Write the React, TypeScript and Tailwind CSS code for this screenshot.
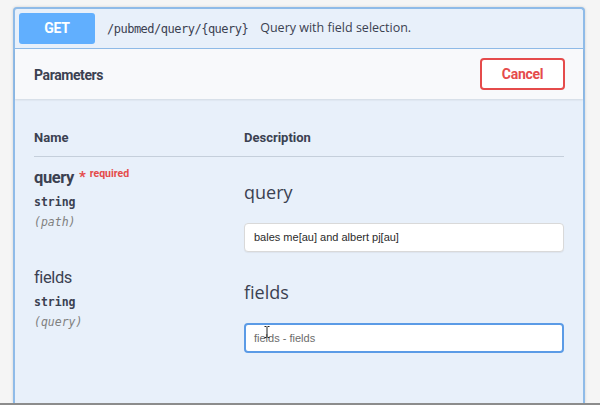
import React from "react";

const sans = "font-['Open_Sans','Liberation_Sans',sans-serif]";
const narrow = "font-['Roboto','Liberation_Sans',sans-serif]";
const mono = "font-['DejaVu_Sans_Mono','Liberation_Mono',monospace]";

type Param = {
  name: string;
  type: string;
  location: string;
  required?: boolean;
  value: string;
  focused?: boolean;
};

const params: Param[] = [
  { name: "query", type: "string", location: "(path)", required: true, value: "bales me[au] and albert pj[au]" },
  { name: "fields", type: "string", location: "(query)", value: "fields - fields", focused: true },
];

const ParamRow = ({ p }: { p: Param }) => {
  return (
    <div className="flex">
      <div className={p.required ? "w-[210px] pt-[11px]" : "w-[210px] pt-[16px]"}>
        <div className={`${narrow} flex items-start h-5`}>
          <span
            className={
              p.required
                ? "text-[16.5px] leading-5 tracking-[-0.4px] font-bold text-[#3b4151]"
                : "text-[16.5px] leading-5 tracking-[-0.4px] text-[#3b4151]"
            }
          >
            {p.name}
          </span>
          {p.required && (
            <>
              <span className="ml-[5px] mt-[1px] text-[15px] leading-4 text-[#e54b4b] font-bold">*</span>
              <span className="ml-[4px] -mt-[2px] text-[10.5px] leading-4 text-[#e54b4b] font-bold">required</span>
            </>
          )}
        </div>
        <div className={`${mono} mt-[6px] text-[11.5px] leading-4 font-semibold text-[#3b4151]`}>{p.type}</div>
        <div className={`${mono} mt-[4px] text-[11.5px] leading-4 italic text-[#808080]`}>{p.location}</div>
      </div>
      <div className="flex-1">
        <div className={`${p.required ? "mt-[24px]" : "mt-[29px]"} text-[18px] leading-[22px] text-[#3b4151]`}>
          {p.name}
        </div>
        <div
          className={
            p.focused
              ? "relative mt-[20px] h-[30px] flex items-center pl-[8px] bg-white rounded-[4px] border-2 border-[#5b9be6]"
              : "relative mt-[20px] h-[29px] flex items-center pl-[9px] bg-white rounded-[4px] border border-[#d9d9d9] shadow-[0_1px_1px_rgba(0,0,0,0.05)]"
          }
        >
          <span className={`font-['Liberation_Sans',sans-serif] text-[11px] ${p.focused ? "text-[#6b6b6b]" : "text-[#2b2b2b]"}`}>
            {p.value}
          </span>
          {p.focused && (
            <svg className="absolute left-[18px] top-[1px]" width="6" height="12" viewBox="0 0 6 12">
              <path d="M0.5 0.5h2M3.5 0.5h2M3 1v10M0.5 11.5h2M3.5 11.5h2" stroke="#222" strokeWidth="1" fill="none" />
            </svg>
          )}
        </div>
      </div>
    </div>
  );
};

export default function App() {
  return (
    <div className={`${sans} w-[600px] h-[405px] overflow-hidden bg-[#f5f5f5] flex flex-col`}>
      <div className="h-[403px] pt-[7px] pl-[13px] pr-[15px] flex">
        <div className="flex-1 flex flex-col border-2 border-b-0 border-[#8fbbe8] rounded-t-[4px] bg-[#e8f0fa] shadow-[0_0_3px_rgba(0,0,0,0.15)]">
          <div className="h-[40px] flex items-center pl-[4px] border-b border-[#8fbbe8]">
            <div className={`${narrow} w-[76px] h-[31px] rounded-[3px] bg-[#61affe] flex items-center justify-center text-white text-[14px] tracking-[-0.2px] font-bold`}>
              GET
            </div>
            <span className={`${mono} ml-[12px] text-[12px] tracking-[-0.5px] text-[#3b4151]`}>
              /pubmed/query/{"{query}"}
            </span>
            <span className="ml-[12px] text-[12.5px] text-[#3b4151]">Query with field selection.</span>
          </div>
          <div className="h-[50px] flex items-center justify-between pl-[19px] pr-[18px] bg-[#f8f9fb] shadow-[0_1px_2px_rgba(0,0,0,0.1)]">
            <span className={`${narrow} mt-[2px] text-[14px] tracking-[-0.4px] font-bold text-[#3b4151]`}>Parameters</span>
            <button className={`${narrow} w-[85px] h-[32px] rounded-[4px] border-2 border-[#e54b4b] bg-white text-[#e54b4b] text-[14px] tracking-[-0.3px] font-bold`}>
              Cancel
            </button>
          </div>
          <div className="flex-1 px-[19px] pt-[31px]">
            <div className={`${narrow} flex h-[16px] items-center text-[13px] font-bold text-[#3b4151] leading-4`}>
              <span className="w-[210px]">Name</span>
              <span>Description</span>
            </div>
            <div className="mt-[10px] h-px bg-[#c5cfdb]" />
            {params.map((p) => (
              <ParamRow key={p.name} p={p} />
            ))}
          </div>
        </div>
      </div>
      <div className="h-[2px] bg-[#8c8c8c]" />
    </div>
  );
}
